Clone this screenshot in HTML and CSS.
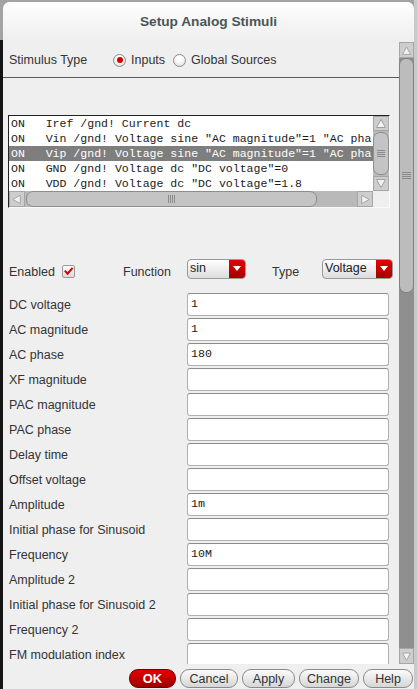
FILE: index.html
```html
<!DOCTYPE html>
<html>
<head>
<meta charset="utf-8">
<title>Setup Analog Stimuli</title>
<link rel="stylesheet" href="styles.css">
</head>
<body>
<div class="dialog">
  <div class="titlebar">Setup Analog Stimuli</div>
  <div class="main">
    <div class="content">
      <div class="stim-row">
        <span class="stim-label">Stimulus Type</span>
        <span class="radio on"></span><span class="radio-text">Inputs</span>
        <span class="radio second"></span><span class="radio-text">Global Sources</span>
      </div>
      <div class="sep"></div>
      <div class="listbox">
        <div class="list-top">
          <div class="rows">
            <div class="row">ON   Iref /gnd! Current dc</div>
            <div class="row">ON   Vin /gnd! Voltage sine "AC magnitude"=1 "AC pha</div>
            <div class="row sel">ON   Vip /gnd! Voltage sine "AC magnitude"=1 "AC pha</div>
            <div class="row">ON   GND /gnd! Voltage dc "DC voltage"=0</div>
            <div class="row">ON   VDD /gnd! Voltage dc "DC voltage"=1.8</div>
          </div>
          <div class="lvscroll">
            <div class="arrow"><svg width="14" height="13" viewBox="0 0 14 13"><polygon points="2.5,10.5 7,2.5 11.5,10.5" fill="#f2f2f2" stroke="#a0a0a0"/></svg></div>
            <div class="lv-track">
              <div class="lv-thumb"><svg width="8" height="9" viewBox="0 0 8 9"><path d="M0 1.5H8M0 3.5H8M0 5.5H8M0 7.5H8" stroke="#8a8a8a"/></svg></div>
            </div>
            <div class="arrow"><svg width="14" height="13" viewBox="0 0 14 13"><polygon points="2.5,2.5 7,10.5 11.5,2.5" fill="#f2f2f2" stroke="#a0a0a0"/></svg></div>
          </div>
        </div>
        <div class="hscroll">
          <div class="harrow"><svg width="15" height="15" viewBox="0 0 15 15"><polygon points="11,3 3,7.5 11,12" fill="#f2f2f2" stroke="#a0a0a0"/></svg></div>
          <div class="h-track">
            <div class="h-thumb"><svg width="9" height="8" viewBox="0 0 9 8"><path d="M1.5 0V8M3.5 0V8M5.5 0V8M7.5 0V8" stroke="#8a8a8a"/></svg></div>
          </div>
          <div class="harrow"><svg width="15" height="15" viewBox="0 0 15 15"><polygon points="4,3 12,7.5 4,12" fill="#f2f2f2" stroke="#a0a0a0"/></svg></div>
          <div class="corner"></div>
        </div>
      </div>
      <div class="enabled-row">
        <span class="en-label lbl">Enabled</span>
        <span class="checkbox"><svg width="12" height="12" viewBox="0 0 12 12"><path d="M2 5.5L5 9L10.5 2.5" fill="none" stroke="#d40000" stroke-width="2.2"/></svg></span>
        <span class="fn-label lbl">Function</span>
        <span class="combo fn-combo"><span class="combo-text">sin</span><span class="combo-btn"><svg width="8" height="5" viewBox="0 0 8 5"><polygon points="0,0 8,0 4,5" fill="#ffffff"/></svg></span></span>
        <span class="type-label lbl">Type</span>
        <span class="combo type-combo"><span class="combo-text">Voltage</span><span class="combo-btn"><svg width="8" height="5" viewBox="0 0 8 5"><polygon points="0,0 8,0 4,5" fill="#ffffff"/></svg></span></span>
      </div>
      <div class="fields">
        <div class="field-row"><span class="f-label">DC voltage</span><span class="f-input">1</span></div>
        <div class="field-row"><span class="f-label">AC magnitude</span><span class="f-input">1</span></div>
        <div class="field-row"><span class="f-label">AC phase</span><span class="f-input">180</span></div>
        <div class="field-row"><span class="f-label">XF magnitude</span><span class="f-input"></span></div>
        <div class="field-row"><span class="f-label">PAC magnitude</span><span class="f-input"></span></div>
        <div class="field-row"><span class="f-label">PAC phase</span><span class="f-input"></span></div>
        <div class="field-row"><span class="f-label">Delay time</span><span class="f-input"></span></div>
        <div class="field-row"><span class="f-label">Offset voltage</span><span class="f-input"></span></div>
        <div class="field-row"><span class="f-label">Amplitude</span><span class="f-input">1m</span></div>
        <div class="field-row"><span class="f-label">Initial phase for Sinusoid</span><span class="f-input"></span></div>
        <div class="field-row"><span class="f-label">Frequency</span><span class="f-input">10M</span></div>
        <div class="field-row"><span class="f-label">Amplitude 2</span><span class="f-input"></span></div>
        <div class="field-row"><span class="f-label">Initial phase for Sinusoid 2</span><span class="f-input"></span></div>
        <div class="field-row"><span class="f-label">Frequency 2</span><span class="f-input"></span></div>
        <div class="field-row"><span class="f-label">FM modulation index</span><span class="f-input"></span></div>
      </div>
    </div>
    <div class="vscroll">
      <div class="arrow big"><svg width="15" height="15" viewBox="0 0 15 15"><polygon points="3,12 7.5,3.5 12,12" fill="#f2f2f2" stroke="#a0a0a0"/></svg></div>
      <div class="v-thumb"><svg width="9" height="9" viewBox="0 0 9 9"><path d="M0 1.5H9M0 3.5H9M0 5.5H9M0 7.5H9" stroke="#8a8a8a"/></svg></div>
      <div class="v-track"></div>
      <div class="arrow big"><svg width="15" height="15" viewBox="0 0 15 15"><polygon points="3,3.5 7.5,12 12,3.5" fill="#f2f2f2" stroke="#a0a0a0"/></svg></div>
    </div>
  </div>
  <div class="buttons">
    <span class="btn ok">OK</span>
    <span class="btn cancel">Cancel</span>
    <span class="btn apply">Apply</span>
    <span class="btn change">Change</span>
    <span class="btn help">Help</span>
  </div>
</div>
</body>
</html>
```

FILE: styles.css
```css
* { box-sizing: border-box; }
html, body { margin: 0; padding: 0; }
body {
  width: 417px;
  height: 689px;
  overflow: hidden;
  background:
    linear-gradient(to right, transparent 0 414px, #c9c9c9 414px),
    linear-gradient(#a3a3a3 0 40px, #151515 40px);
  font-family: "Liberation Sans", Arial, sans-serif;
  color: #333333;
}
.dialog {
  margin: 2px 3px 0 3px;
  width: 411px;
  height: 687px;
  display: flex;
  flex-direction: column;
  background: #efefef;
  border-radius: 7px 7px 0 0;
  overflow: hidden;
}
.titlebar {
  height: 40px;
  flex: none;
  background: linear-gradient(#fefefe, #eeeeee);
  display: flex;
  align-items: center;
  justify-content: center;
  font-weight: bold;
  font-size: 13.7px;
  color: #4a5558;
  padding-bottom: 2px;
}
.main {
  height: 622px;
  flex: none;
  display: flex;
}
.content {
  width: 396px;
  overflow: hidden;
}
/* stimulus type row */
.stim-row {
  height: 35px;
  display: flex;
  align-items: center;
  padding-left: 6px;
  padding-top: 1px;
  font-size: 12.5px;
}
.stim-label { width: 104px; }
.radio {
  width: 13px;
  height: 13px;
  border-radius: 50%;
  border: 1px solid #8c8c8c;
  background: radial-gradient(circle at 50% 35%, #ffffff 0 30%, #d4d4d4 100%);
  display: inline-flex;
  align-items: center;
  justify-content: center;
  margin-right: 5px;
}
.radio.on::after {
  content: "";
  width: 6px;
  height: 6px;
  border-radius: 50%;
  background: #d00000;
}
.radio.second { margin-left: 8px; }
.sep { height: 1px; background: #5a5a5a; }
/* listbox */
.listbox {
  margin: 37px 0 0 5px;
  width: 382px;
  height: 93px;
  border: 1px solid;
  border-color: #222222 #fafafa #fafafa #222222;
  background: #ffffff;
  display: flex;
  flex-direction: column;
}
.list-top { height: 75px; display: flex; }
.rows {
  width: 364px;
  overflow: hidden;
  font-family: "Liberation Mono", "Courier New", monospace;
  font-size: 11.55px;
  color: #1a1a1a;
}
.row {
  height: 15px;
  line-height: 15px;
  white-space: pre;
  padding-left: 2px;
}
.row.sel { background: #7e7e7e; color: #ffffff; }
.lvscroll {
  width: 16px;
  display: flex;
  flex-direction: column;
  background: #b9b9b9;
}
.arrow {
  height: 15px;
  flex: none;
  background: #cdcdcd;
  border: 1px solid #a6a6a6;
  display: flex;
  align-items: center;
  justify-content: center;
}
.lv-track { flex: 1; padding: 1px 0; display: flex; }
.lv-thumb {
  flex: 1;
  border: 1px solid #8d8d8d;
  border-radius: 7px;
  background: #c4c4c4;
  display: flex;
  align-items: center;
  justify-content: center;
}
.hscroll {
  height: 16px;
  display: flex;
  background: #b9b9b9;
}
.harrow {
  width: 16px;
  flex: none;
  background: #cdcdcd;
  border: 1px solid #a6a6a6;
  display: flex;
  align-items: center;
  justify-content: center;
}
.h-track { width: 332px; display: flex; padding: 0 40px 0 1px; }
.h-thumb {
  flex: 1;
  border: 1px solid #8d8d8d;
  border-radius: 7px;
  background: #c4c4c4;
  display: flex;
  align-items: center;
  justify-content: center;
}
.corner { flex: 1; background: #efefef; }
/* enabled row */
.enabled-row {
  margin-top: 50px;
  height: 21px;
  display: flex;
  align-items: center;
  padding-left: 6px;
  font-size: 12.5px;
}
.enabled-row .lbl { padding-top: 6px; }
.en-label { width: 53px; }
.checkbox {
  width: 13px;
  height: 13px;
  margin-top: 5px;
  border: 1px solid #9a9a9a;
  border-radius: 2px;
  background: linear-gradient(#ffffff, #dadada);
  display: flex;
  align-items: center;
  justify-content: center;
}
.fn-label { margin-left: 48px; width: 64px; }
.type-label { margin-left: 26px; width: 50px; }
.combo {
  height: 20px;
  display: flex;
  border: 1px solid #9a9a9a;
  border-radius: 4px;
  background: linear-gradient(#ffffff, #dcdcdc);
  overflow: hidden;
}
.fn-combo { width: 59px; }
.type-combo { width: 71px; }
.combo-text {
  flex: 1;
  padding: 1px 0 0 2px;
  font-size: 12.5px;
  line-height: 14px;
  color: #222;
}
.combo-btn {
  width: 16px;
  background: linear-gradient(#e30000, #a60000);
  display: flex;
  align-items: center;
  justify-content: center;
}
/* fields */
.fields { margin-top: 14px; }
.field-row {
  height: 23px;
  margin-bottom: 2px;
  display: flex;
  align-items: center;
  padding-left: 6px;
  font-size: 12.5px;
}
.f-label { width: 178px; }
.f-input {
  width: 202px;
  height: 23px;
  border: 1px solid #b0b0b0;
  border-top-color: #8c8c8c;
  border-radius: 3px;
  background: #ffffff;
  font-family: "Liberation Mono", "Courier New", monospace;
  font-size: 11.67px;
  line-height: 21px;
  padding-left: 3px;
  color: #1a1a1a;
}
/* outer scrollbar */
.vscroll {
  width: 15px;
  display: flex;
  flex-direction: column;
  background: #8f8f8f;
}
.arrow.big { height: 16px; }
.v-thumb {
  height: 235px;
  flex: none;
  border: 1px solid #7f7f7f;
  border-radius: 7px;
  background: #bcbcbc;
  display: flex;
  align-items: center;
  justify-content: center;
}
.v-track { flex: 1; }
/* buttons */
.buttons {
  flex: 1;
  display: flex;
  justify-content: flex-end;
  align-items: flex-start;
  padding: 5px 1px 0 0;
  gap: 4px;
}
.btn {
  height: 19px;
  border: 1px solid #8a8a8a;
  border-radius: 9px;
  background: linear-gradient(#fbfbfb, #d6d6d6);
  font-size: 12.5px;
  color: #333;
  display: flex;
  align-items: center;
  justify-content: center;
}
.btn.ok {
  width: 47px;
  background: linear-gradient(#e40000, #9e0000);
  border-color: #6e0000;
  color: #ffffff;
  font-weight: bold;
  font-size: 13px;
}
.btn.cancel { width: 58px; }
.btn.apply { width: 53px; }
.btn.change { width: 60px; }
.btn.help { width: 50px; }
```
